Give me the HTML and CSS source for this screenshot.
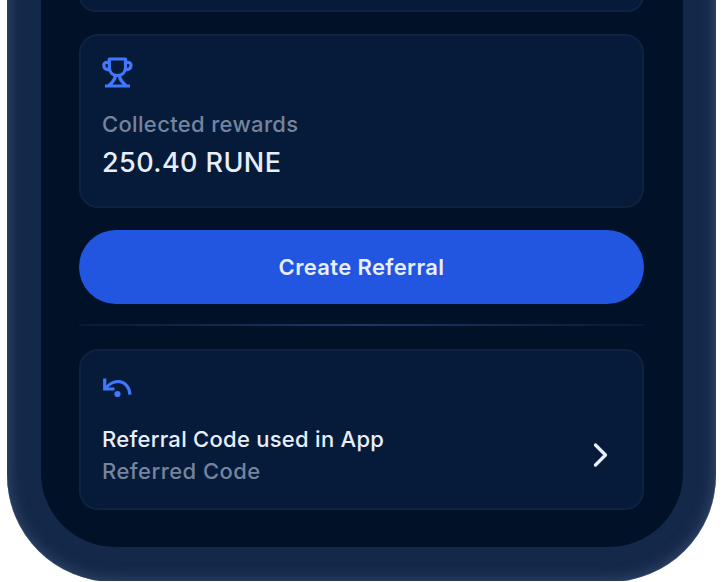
FILE: index.html
```
<!DOCTYPE html>
<html lang="en">
<head>
<meta charset="utf-8">
<title>Referrals</title>
<link rel="stylesheet" href="styles.css">
</head>
<body>
<div class="phone">
  <main class="screen">
    <section class="card card-previous"></section>
    <section class="card rewards">
      <svg class="icon" width="32" height="32" viewBox="0 0 32 32" fill="none" stroke="#4277ff" stroke-width="3.200" stroke-linejoin="round">
        <path d="M7.300 3H23.500V11.500c0 5-3.600 8-8.100 8s-8.100-3-8.100-8zM7.300 6.300H4.800a3 3 0 0 0-3 3c0 2.800 1.800 4.500 5.500 4.500M23.500 6.300h2.500a3 3 0 0 1 3 3c0 2.800-1.800 4.500-5.500 4.500M13.200 19.500c0 4-1.200 5-3.200 7l-3 3M17.600 19.500c0 4 1.200 5 3.200 7l3 3M3 30h25"/>
      </svg>
      <span class="label">Collected rewards</span>
      <span class="amount">250.40 RUNE</span>
    </section>
    <button class="create" type="button">Create Referral</button>
    <div class="divider"></div>
    <section class="card code">
      <div class="code-text">
        <svg class="icon" width="32" height="32" viewBox="0 0 32 32" fill="none" stroke="#4277ff" stroke-width="3.200">
          <path d="M2.700 7.500v10.500H12.500M3.500 17.500C7.500 12.500 11.500 10.500 16 10.500c6.500 0 11.300 5 12 13.200"/>
          <circle cx="15.500" cy="23" r="3.100" fill="#4277ff" stroke="none"/>
        </svg>
        <span class="title">Referral Code used in App</span>
        <span class="label referred">Referred Code</span>
      </div>
      <svg class="chevron" width="16" height="26" viewBox="0 0 16 26" fill="none" stroke="#e8eefc" stroke-width="3.300" stroke-linecap="round" stroke-linejoin="round">
        <path d="M2.500 3l10 10-10 10"/>
      </svg>
    </section>
  </main>
</div>
</body>
</html>
```
FILE: styles.css
```
* { box-sizing: border-box; }
html { overflow: hidden; background: #fff; }
body {
  margin: 0;
  height: 581px;
  overflow: hidden;
  font-family: Inter, "Liberation Sans", sans-serif;
}
.phone {
  width: 709px;
  height: 782px;
  margin: -200px 0 0 7px;
  padding: 0 33.500px 35.500px;
  border-radius: 107px;
  background: #14284a;
  box-shadow: inset 0 0 1px 0 #6b7b94, inset 0 0 16px 0 #3b5070;
}
.screen {
  height: 746.500px;
  padding: 180px 38.500px 0;
  border-radius: 0 0 74px 74px;
  background: #001128;
  display: flex;
  flex-direction: column;
}
.card {
  flex: none;
  border: 2px solid #0e2341;
  border-radius: 19px;
  background: #061b39;
}
.card-previous { height: 32px; margin-bottom: 22px; }
.rewards {
  height: 174px;
  padding: 20px 21px;
  display: flex;
  flex-direction: column;
}
.icon { display: block; flex: none; }
.label {
  color: #74849e;
  font-size: 22px;
  font-weight: 500;
  line-height: 30px;
  letter-spacing: 0.340px;
}
.rewards .label { margin-top: 21px; }
.amount {
  margin-top: 5px;
  color: #e8eefc;
  font-size: 27px;
  font-weight: 500;
  line-height: 38px;
  letter-spacing: 0.420px;
}
.title {
  margin-top: 21px;
  color: #e8eefc;
  font-size: 22px;
  font-weight: 500;
  line-height: 31px;
  letter-spacing: 0.270px;
}
.referred { line-height: 33px; letter-spacing: 0.460px; }
.create {
  flex: none;
  height: 74px;
  margin-top: 22px;
  padding: 0;
  border: 0;
  border-radius: 37px;
  background: #2255e0;
  color: #e8eefc;
  font-family: inherit;
  font-size: 22px;
  font-weight: 600;
  letter-spacing: 0.360px;
}
.divider {
  flex: none;
  height: 2px;
  margin: 20px 0 23px;
  background: linear-gradient(90deg, #071a33, #1c3866 50%, #071a33);
}
.code {
  height: 161px;
  padding: 20px 33px 0 21px;
  display: flex;
  justify-content: space-between;
}
.code-text { display: flex; flex-direction: column; }
.chevron { margin-top: 71px; }
```
